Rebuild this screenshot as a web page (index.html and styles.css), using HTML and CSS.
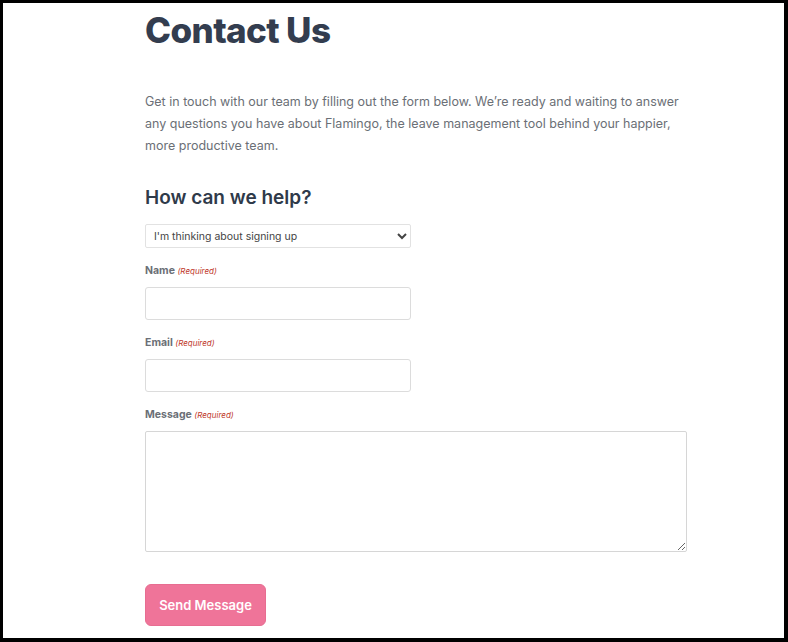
FILE: index.html
```html
<!DOCTYPE html>
<html lang="en">
<head>
    <meta charset="UTF-8">
    <meta name="viewport" content="width=device-width, initial-scale=1.0">
    <title>Contact Us</title>
    <link rel="stylesheet" href="styles.css">
</head>
<body>
    <div class="frame">
        <div class="contact">
            <h1>Contact Us</h1>

            <p class="intro">Get in touch with our team by filling out the form below. We’re ready and waiting to answer any questions you have about Flamingo, the leave management tool behind your happier, more productive team.</p>

            <h3>How can we help?</h3>

            <!-- Contact form -->
            <form class="contact-form">
                <select class="topic">
                    <option>I'm thinking about signing up</option>
                    <option>I'm already a customer</option>
                    <option>Something else</option>
                </select>

                <div class="field">
                    <label>Name <span class="required">(Required)</span></label>
                    <input type="text" class="short">
                </div>

                <div class="field">
                    <label>Email <span class="required">(Required)</span></label>
                    <input type="email" class="short">
                </div>

                <div class="field">
                    <label>Message <span class="required">(Required)</span></label>
                    <textarea></textarea>
                </div>

                <button type="button" class="send">Send Message</button>
            </form>
        </div>
    </div>
</body>
</html>
```

FILE: styles.css
```css
body {
    margin: 0;
    background: #fff;
    font-family: 'Inter', sans-serif;
}
.frame {
    width: 788px;
    height: 642px;
    box-sizing: border-box;
    border-style: solid;
    border-color: #000;
    border-width: 3px 4px 4px 3px;
    overflow: hidden;
}
.contact {
    width: 542px;
    margin-left: 142px;
}
.contact h1 {
    margin: 5px 0 0 0;
    font-size: 35px;
    font-weight: 800;
    letter-spacing: -0.6px;
    color: #333d4f;
    line-height: 44px;
}
.intro {
    margin: 39px 0 0 0;
    font-size: 12.5px;
    line-height: 22px;
    color: #6b6f76;
}
.contact h3 {
    margin: 29px 0 0 0;
    font-size: 19px;
    font-weight: 600;
    color: #2f3a4a;
    line-height: 24px;
}
.contact-form {
    margin-top: 14px;
}
.topic {
    display: block;
    width: 266px;
    height: 24px;
    font-family: 'Inter', sans-serif;
    font-size: 10.5px;
    color: #444;
    border: 1px solid #e2e2e2;
    border-radius: 2px;
    background: #fff;
    padding: 0 4px;
}
.field {
    margin-top: 16px;
}
.field label {
    display: block;
    font-size: 10.5px;
    font-weight: 700;
    color: #6b6f76;
    line-height: 14px;
    margin-bottom: 9px;
}
.required {
    font-size: 8px;
    font-weight: 400;
    font-style: italic;
    color: #c0392b;
}
.field input.short {
    display: block;
    width: 266px;
    height: 33px;
    box-sizing: border-box;
    border: 1px solid #dcdcdc;
    border-radius: 3px;
}
.field textarea {
    display: block;
    width: 542px;
    height: 121px;
    box-sizing: border-box;
    border: 1px solid #d6d6d6;
    border-radius: 2px;
}
.send {
    margin-top: 32px;
    width: 121px;
    height: 42px;
    border: 1px solid #e76d91;
    border-radius: 6px;
    background: #ef7499;
    color: #fff;
    font-family: 'Inter', sans-serif;
    font-size: 13px;
    font-weight: 600;
    cursor: pointer;
}
```
